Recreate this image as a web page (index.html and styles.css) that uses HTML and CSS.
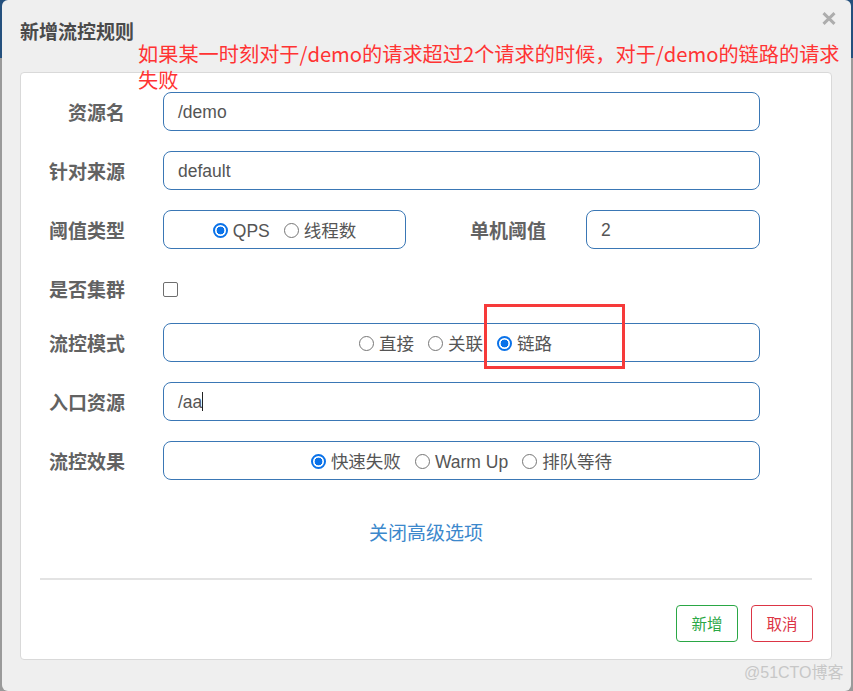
FILE: index.html
```html
<!DOCTYPE html>
<html lang="zh-CN">
<head>
<meta charset="utf-8">
<title>新增流控规则</title>
<link rel="stylesheet" href="styles.css">
</head>
<body>
<div class="backdrop">
  <div class="modal">
    <div class="modal-header">
      <h4 class="modal-title">新增流控规则</h4>
      <span class="close-btn" aria-label="close">
        <svg width="14" height="13" viewBox="0 0 14 13"><path d="M1.5 1.2 L12.5 11.8 M12.5 1.2 L1.5 11.8" stroke="#adadad" stroke-width="3" stroke-linecap="butt" fill="none"/></svg>
      </span>
    </div>

    <div class="card">
      <div class="form">
        <div class="row">
          <label class="lbl">资源名</label>
          <div class="ctl grow">/demo</div>
        </div>
        <div class="row">
          <label class="lbl">针对来源</label>
          <div class="ctl grow">default</div>
        </div>
        <div class="row">
          <label class="lbl">阈值类型</label>
          <div class="ctl radios box-type">
            <span class="opt"><input type="radio" name="grade" checked>QPS</span>
            <span class="opt"><input type="radio" name="grade">线程数</span>
          </div>
          <label class="lbl lbl-inline">单机阈值</label>
          <div class="ctl box-count">2</div>
        </div>
        <div class="row row-check">
          <label class="lbl">是否集群</label>
          <input type="checkbox" class="check">
        </div>
        <div class="row">
          <label class="lbl">流控模式</label>
          <div class="ctl radios radios-offset grow">
            <span class="opt"><input type="radio" name="strategy">直接</span>
            <span class="opt"><input type="radio" name="strategy">关联</span>
            <span class="opt"><input type="radio" name="strategy" checked>链路</span>
          </div>
        </div>
        <div class="row">
          <label class="lbl">入口资源</label>
          <div class="ctl grow">/aa<span class="caret"></span></div>
        </div>
        <div class="row">
          <label class="lbl">流控效果</label>
          <div class="ctl radios grow">
            <span class="opt"><input type="radio" name="behavior" checked>快速失败</span>
            <span class="opt"><input type="radio" name="behavior">Warm Up</span>
            <span class="opt"><input type="radio" name="behavior">排队等待</span>
          </div>
        </div>
      </div>

      <div class="adv"><a class="adv-link">关闭高级选项</a></div>
      <hr class="divider">
      <div class="footer">
        <button class="btn btn-green">新增</button>
        <button class="btn btn-red">取消</button>
      </div>
    </div>

    <div class="note">如果某一时刻对于/demo的请求超过2个请求的时候，对于/demo的链路的请求<br>失败</div>
    <div class="mark"></div>
    <div class="watermark">@51CTO博客</div>
  </div>
</div>
</body>
</html>
```

FILE: styles.css
```css
* { box-sizing: border-box; }

html, body {
  margin: 0;
  padding: 0;
}

body {
  font-family: "Liberation Sans", "Noto Sans CJK SC", sans-serif;
  background: linear-gradient(to bottom, #24507d 0, #24507d 58px, #9a9a9a 58px, #9a9a9a 100%);
  width: 853px;
  height: 691px;
  overflow: hidden;
}

.backdrop {
  padding: 0 2px 0 2px;
  height: 691px;
}

.modal {
  position: relative;
  width: 849px;
  height: 691px;
  background: #efefef;
  border-radius: 6px;
}

.modal-header {
  height: 72px;
  padding: 19px 0 0 18px;
}

.modal-title {
  margin: 0;
  font-family: "Noto Sans CJK SC", sans-serif;
  font-size: 19px;
  font-weight: 700;
  line-height: 24px;
  color: #4a4a4a;
}

.close-btn {
  position: absolute;
  left: 820px;
  top: 12px;
  width: 14px;
  height: 13px;
  display: block;
}
.close-btn svg { display: block; }

.card {
  margin: 0 19px 0 18px;
  height: 588px;
  background: #fff;
  border: 1px solid #d9d9d9;
  border-radius: 4px;
  padding: 19px 0 0 0;
}

.form {
  display: flex;
  flex-direction: column;
  gap: 20px;
  padding-right: 71px;
}

.row {
  display: flex;
  align-items: center;
  height: 39px;
}

.row-check {
  height: 34px;
  padding-top: 6px;
}

.lbl {
  width: 104px;
  flex: none;
  margin-right: 38px;
  text-align: right;
  font-family: "Noto Sans CJK SC", sans-serif;
  font-size: 19px;
  font-weight: 700;
  color: #626262;
  line-height: 24px;
}

.lbl-inline {
  width: auto;
  flex: 1;
  margin-right: 39px;
  padding-right: 1px;
}

.ctl {
  height: 39px;
  border: 1px solid #3a77b5;
  border-radius: 8px;
  padding: 0 14px;
  display: flex;
  align-items: center;
  font-size: 17.5px;
  color: #555;
  line-height: 22px;
}

.grow { flex: 1; }

.box-type { width: 243px; flex: none; }
.box-count { width: 174px; flex: none; }

.radios {
  justify-content: center;
  gap: 14px;
  padding: 2px 0 0 0;
}

.radios-offset {
  padding-right: 12px;
}

.opt {
  display: inline-flex;
  align-items: center;
  font-family: "Liberation Sans", "Noto Sans CJK SC", sans-serif;
  font-size: 17.5px;
  color: #555;
}

.opt input {
  -webkit-appearance: none;
  appearance: none;
  width: 15px;
  height: 15px;
  margin: 0 5px 0 0;
  flex: none;
  border: 1px solid #767676;
  border-radius: 50%;
  background: #fff;
}

.opt input:checked {
  border: 2px solid #0a72e9;
  background: radial-gradient(circle, #0a72e9 0, #0a72e9 3.6px, #fff 4.2px);
}

.check {
  -webkit-appearance: none;
  appearance: none;
  width: 15px;
  height: 15px;
  margin: 0;
  border: 1px solid #6e6e6e;
  border-radius: 2px;
  background: #fff;
}

.caret {
  display: inline-block;
  width: 1px;
  height: 19px;
  background: #222;
  margin-left: 0;
}

.adv {
  margin-top: 39px;
  text-align: center;
  line-height: 26px;
}

.adv-link {
  font-family: "Noto Sans CJK SC", sans-serif;
  font-size: 19px;
  color: #3c88cc;
  text-decoration: none;
}

.divider {
  margin: 30px 19px 0 19px;
  border: 0;
  height: 2px;
  background: #e3e3e3;
}

.footer {
  margin-top: 25px;
  padding-right: 18px;
  display: flex;
  justify-content: flex-end;
  gap: 13px;
}

.btn {
  width: 62px;
  height: 37px;
  background: #fff;
  border-radius: 4px;
  font-family: "Noto Sans CJK SC", sans-serif;
  font-size: 15.5px;
  padding: 0;
  line-height: 1;
}

.btn-green { border: 1px solid #2aa745; color: #2aa745; }
.btn-red { border: 1px solid #dc3545; color: #dc3545; }

.note {
  position: absolute;
  left: 136px;
  top: 41px;
  font-family: "Noto Sans CJK SC", sans-serif;
  font-size: 20.2px;
  line-height: 26px;
  color: #ff3333;
  white-space: nowrap;
}

.mark {
  position: absolute;
  left: 482px;
  top: 304px;
  width: 141px;
  height: 65px;
  border: 3px solid #f63a3a;
}

.watermark {
  position: absolute;
  left: 742px;
  top: 662px;
  font-family: "Liberation Sans", "Noto Sans CJK SC", sans-serif;
  font-size: 16px;
  line-height: 22px;
  color: #c7c7c7;
  white-space: nowrap;
}
```
